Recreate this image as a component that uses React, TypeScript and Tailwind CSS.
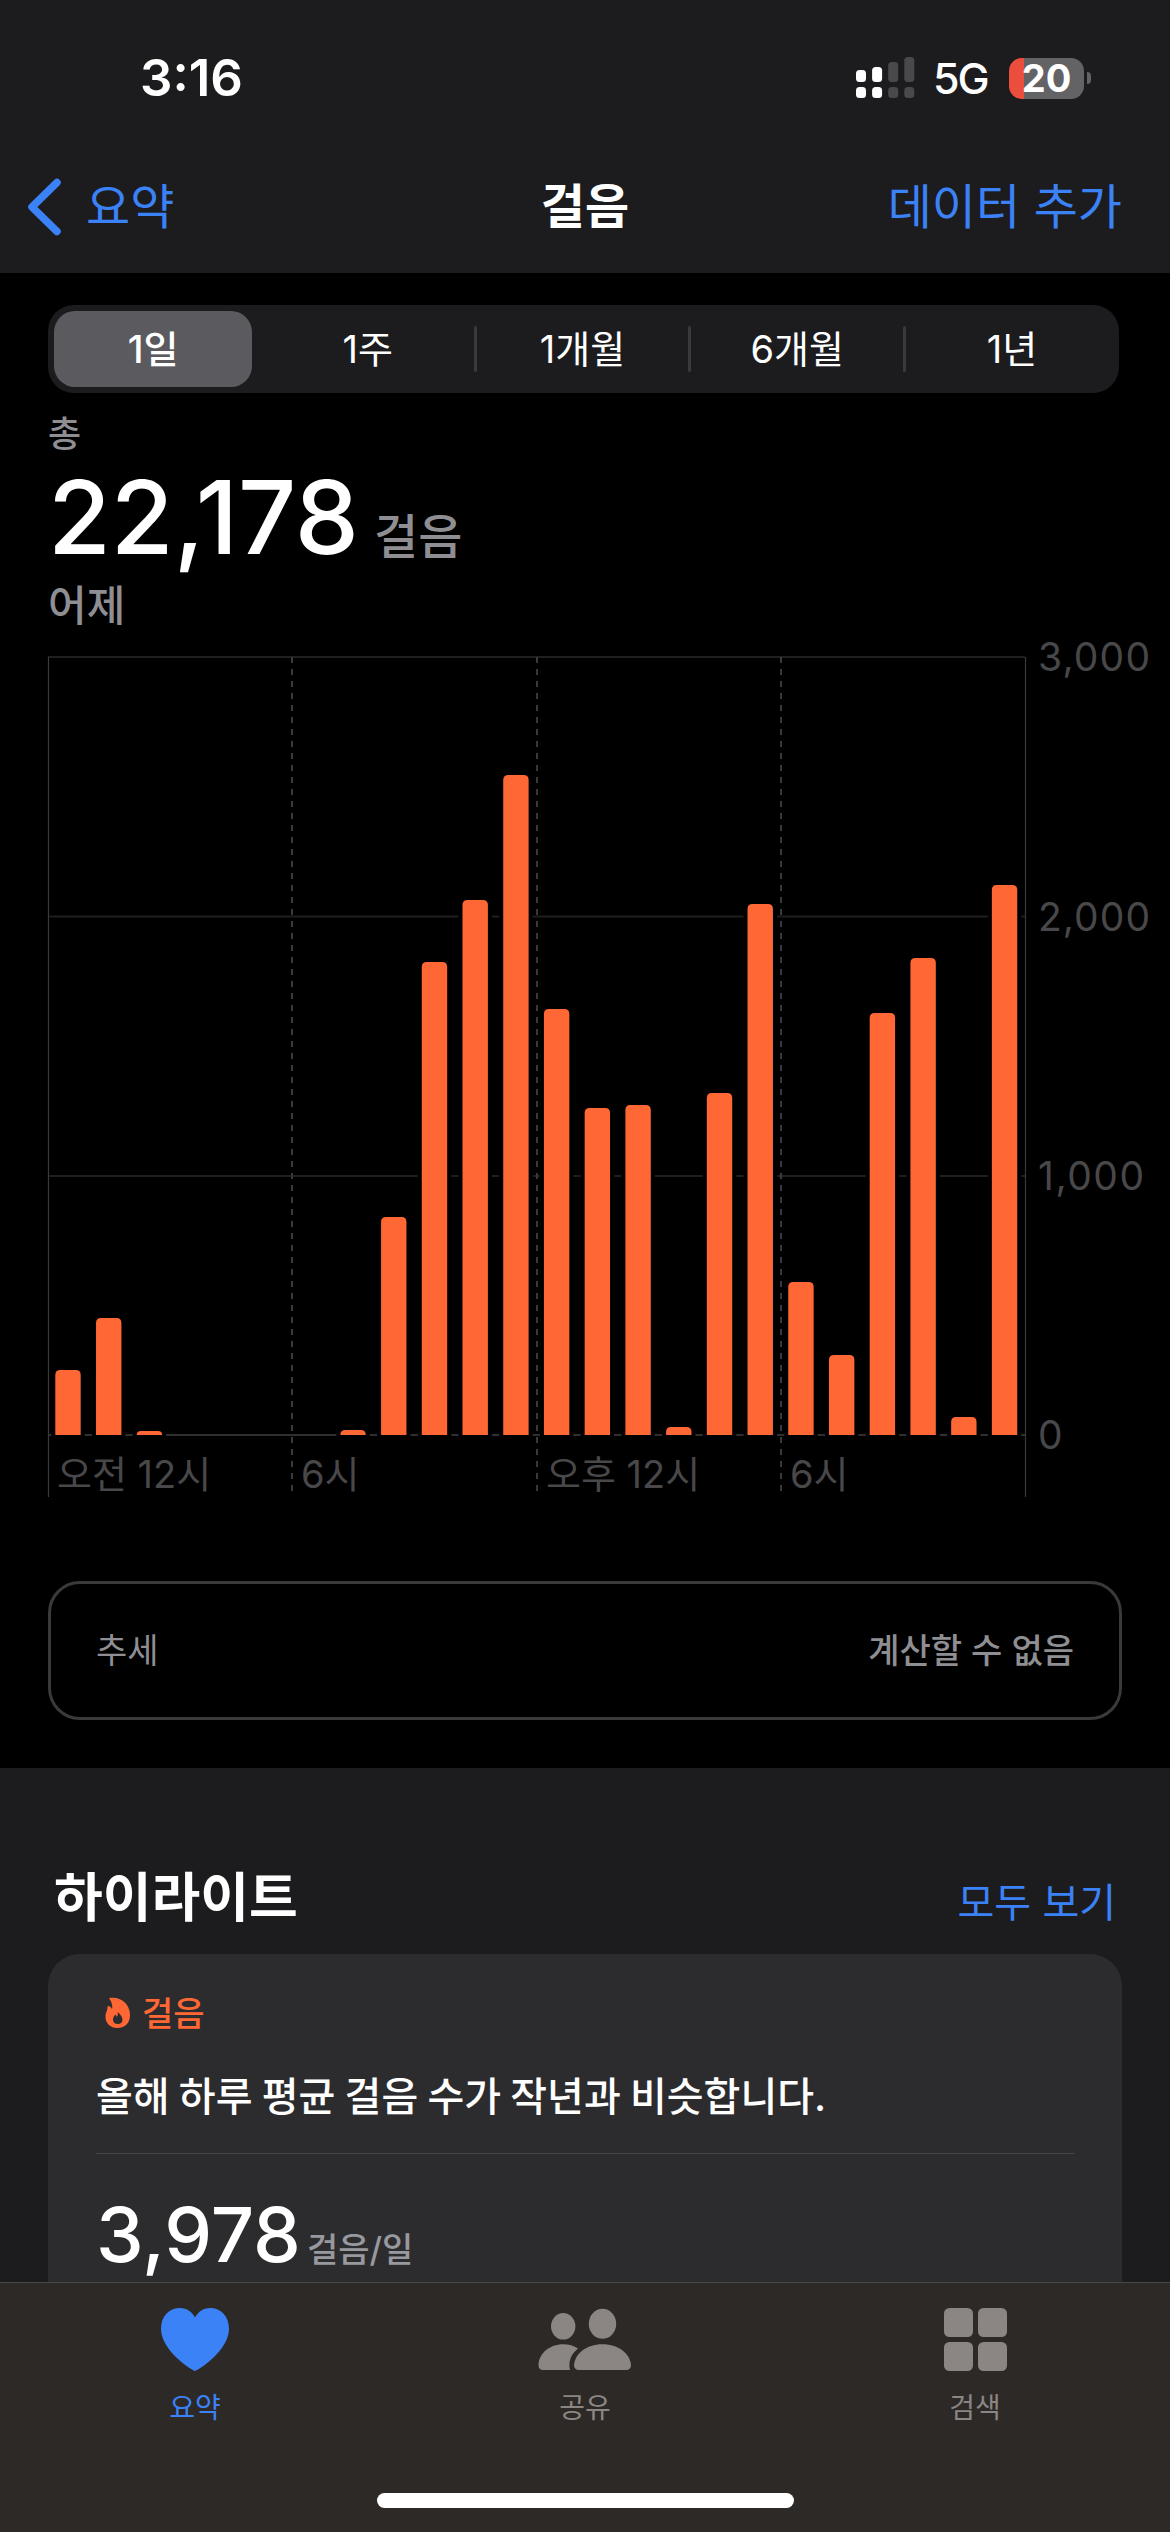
import { Fragment, useState } from 'react';

const ranges = ['1일', '1주', '1개월', '6개월', '1년'];

// Top edge of each hourly bar, null when there are no steps
const barTops: (number | null)[] = [
  1370, 1318, 1431, null, null, null, null, 1430, 1217, 962, 900, 775,
  1009, 1108, 1105, 1427, 1093, 904, 1282, 1355, 1013, 958, 1417, 885,
];

const CHART_TOP = 631;
const BASELINE = 1435;
const BAR_WIDTH = 25.4;

const barX = (i: number) => 55.3 + i * 40.72;

const SignalIcon = () => (
  <svg width="60" height="42" viewBox="0 0 60 42">
    {[13, 10, 5, 0].map((top, i) => (
      <g key={i} fill={i < 2 ? '#fff' : '#49494b'}>
        <rect x={i * 16.1} y={top} width="10" height={25 - top} rx="3.5" />
        <rect x={i * 16.1} y="30" width="10" height="11" rx="3.5" />
      </g>
    ))}
  </svg>
);

const StatusBar = () => (
  <div className="flex h-[155px] items-start justify-between pt-[57px]">
    <span className="ml-[140px] text-[51px] leading-[42px] font-semibold">3:16</span>
    <div className="mr-[79px] flex items-center">
      <SignalIcon />
      <span className="ml-[17px] w-[58px] text-[43px] leading-[42px] font-medium tracking-[-2px]">5G</span>
      <div className="ml-[18px] flex h-[41px] w-[75px] items-center justify-center rounded-[13px] bg-[linear-gradient(90deg,#eb4e3d_15px,#636366_15px)] text-[38px] leading-[41px] font-bold">
        20
      </div>
      <div className="ml-[3px] h-3 w-1 rounded-r-full bg-[#636366]" />
    </div>
  </div>
);

const NavBar = () => (
  <div className="grid h-[118px] grid-cols-3 items-center pb-[14px] text-[48px] leading-[60px]">
    <button className="flex items-center text-[#3b82f7]">
      <svg className="ml-[27px]" width="34" height="58" viewBox="0 0 34 58" fill="none">
        <path d="M30 4.500L5 29L30 53.500" stroke="currentColor" strokeWidth="7.500" strokeLinecap="round" strokeLinejoin="round" />
      </svg>
      <span className="ml-[25px]">요약</span>
    </button>
    <h1 className="text-center font-semibold">걸음</h1>
    <button className="mr-[48px] text-right text-[#3b82f7]">데이터 추가</button>
  </div>
);

const StepsChart = () => (
  <svg
    className="block font-['Inter','Noto_Sans_CJK_KR',sans-serif]"
    width="1170"
    height="879"
    viewBox={`0 ${CHART_TOP} 1170 879`}
  >
    {[657, 916.5, 1176].map(y => (
      <line key={y} x1="48" x2="1025" y1={y} y2={y} stroke="#1f1f20" strokeWidth="2" />
    ))}
    <line x1="48" x2="1025" y1={BASELINE} y2={BASELINE} stroke="#2f2f31" strokeWidth="2" />

    {/* Grid lines stop short of the bars */}
    {barTops.map((top, i) =>
      top === null ? null : (
        <rect key={i} x={barX(i) - 4} y={top - 4} width={BAR_WIDTH + 8} height={BASELINE - top + 5} fill="#000" />
      )
    )}

    <path d="M48.500 657V1497M1025.500 657V1497" stroke="#3a3a3c" strokeWidth="1.200" />
    {[292, 537, 781].map(x => (
      <line key={x} x1={x} x2={x} y1="657" y2="1497" stroke="#3a3a3c" strokeWidth="2" strokeDasharray="6 6" />
    ))}

    {barTops.map((top, i) => {
      if (top === null) return null;
      const r = Math.min(5, BASELINE - top);
      return (
        <path
          key={i}
          d={`M${barX(i)} ${BASELINE}V${top + r}q0 ${-r} ${r} ${-r}h${BAR_WIDTH - 2 * r}q${r} 0 ${r} ${r}V${BASELINE}z`}
          fill="#ff6734"
        />
      );
    })}

    <g fill="#48484a" fontSize="39">
      <text x="1038" y="671" textLength="112">3,000</text>
      <text x="1038" y="930.500" textLength="112">2,000</text>
      <text x="1038" y="1190" textLength="106">1,000</text>
      <text x="1038" y="1449">0</text>
    </g>
    <g fill="#48484a" fontSize="38">
      <text x="57" y="1488">오전 12시</text>
      <text x="301" y="1488">6시</text>
      <text x="546" y="1488">오후 12시</text>
      <text x="790" y="1488">6시</text>
    </g>
  </svg>
);

const HeartIcon = () => (
  <svg width="68" height="63" viewBox="0 0 68 63" fill="currentColor">
    <path d="M34 63C32 63 0 43 0 21C0 8 8 0 19 0C26 0 31 4 34 9.500C37 4 42 0 49 0C60 0 68 8 68 21C68 43 36 63 34 63z" />
  </svg>
);

const PeopleIcon = () => (
  <svg width="94" height="63" viewBox="0 0 94 63" fill="currentColor">
    <ellipse cx="25.200" cy="18.300" rx="12.200" ry="13.200" />
    <ellipse cx="64.500" cy="15.800" rx="13.700" ry="15" />
    <path d="M5 62C2 62 0.500 60.500 0.500 57C1 45 12 36.300 25 36.300C31 36.300 36 37.800 40 40.500C33 46 30 54 32 62z" />
    <path d="M41 62C38 62 36 60.500 36 57C37 46 48 36.300 64.500 36.300C81 36.300 92 46 93 57C93 60.500 91 62 88 62z" />
  </svg>
);

const GridIcon = () => (
  <svg width="63" height="63" viewBox="0 0 63 63" fill="currentColor">
    <rect width="29" height="29" rx="5.500" />
    <rect x="34" width="29" height="29" rx="5.500" />
    <rect y="34" width="29" height="29" rx="5.500" />
    <rect x="34" y="34" width="29" height="29" rx="5.500" />
  </svg>
);

const FlameIcon = () => (
  <svg width="26" height="32" viewBox="0 0 26 32">
    <path
      d="M4 1C15-1 25 6 25 18C25 26 20 31 12.500 31C5 31 0.500 26 0.500 20C0.500 15 3 13 2.500 9C5 9 6 10 7 12C8 8 6 4 4 1z"
      fill="#ff6734"
    />
    <path d="M12.500 15C16 18 17.500 20 17.500 23C17.500 25.500 15.500 27 13 27C10 27 8 25.500 8 22.500C8 20.500 9.500 19 10 17.500C11 18 11.500 18.500 11.700 20C13 18.500 13 17 12.500 15z" fill="#2c2c2e" />
  </svg>
);

const tabs = [
  { label: '요약', icon: <HeartIcon /> },
  { label: '공유', icon: <PeopleIcon /> },
  { label: '검색', icon: <GridIcon /> },
];

export default function App() {
  const [range, setRange] = useState(0);
  const [activeTab, setActiveTab] = useState(0);

  return (
    <div className="flex h-[2532px] w-[1170px] flex-col overflow-hidden bg-[#1c1c1e] font-['Inter','Noto_Sans_CJK_KR',sans-serif] text-white">
      <header className="h-[273px] shrink-0">
        <StatusBar />
        <NavBar />
      </header>

      <section className="h-[1495px] shrink-0 bg-black pt-8">
        {/* Range selector */}
        <div className="mx-[48px] flex h-[88px] w-[1071px] items-center rounded-[26px] bg-[#1c1c1e] p-1.5 pr-2">
          {ranges.map((label, i) => (
            <Fragment key={label}>
              {i > 0 && (
                <div className="flex flex-1 justify-center">
                  {i !== range && i - 1 !== range && <div className="h-[46px] w-[3px] rounded-full bg-[#3a3a3c]" />}
                </div>
              )}
              <button
                onClick={() => setRange(i)}
                className={`h-full w-[198px] rounded-[21px] text-[38px] leading-[76px] ${
                  i === range ? 'bg-[#5b5a5f] font-medium' : ''
                }`}
              >
                {label}
              </button>
            </Fragment>
          ))}
        </div>

        {/* Summary */}
        <div className="h-[238px] px-[48px] pt-[15px] font-medium text-[#8e8e93]">
          <p className="text-[36px] leading-[52px]">총</p>
          <div className="flex h-[121px] items-baseline">
            <span className="text-[102px] leading-[114px] text-white">22,178</span>
            <span className="ml-[15px] text-[48px]">걸음</span>
          </div>
          <p className="text-[42px] leading-[50px]">어제</p>
        </div>

        <StepsChart />

        {/* Trend */}
        <div className="mx-[48px] mt-[71px] flex h-[139px] items-center justify-between rounded-[32px] border-[3px] border-[#3a3a3c] px-[45px] text-[34px] text-[#8e8e93]">
          <span>추세</span>
          <span className="font-medium">계산할 수 없음</span>
        </div>
      </section>

      <section className="flex min-h-0 flex-1 flex-col px-[48px]">
        <div className="flex h-[186px] items-end justify-between px-1.5 pb-6">
          <h2 className="text-[53px] leading-[64px] font-bold">하이라이트</h2>
          <button className="pb-0.5 text-[40px] leading-[50px] text-[#3b82f7]">모두 보기</button>
        </div>
        <div className="min-h-0 flex-1 overflow-hidden rounded-t-[32px] bg-[#2c2c2e] px-[48px] pt-[34px]">
          <div className="flex h-[50px] items-center text-[#ff6734]">
            <span className="ml-[9px]">
              <FlameIcon />
            </span>
            <span className="ml-[11px] text-[34px] font-medium">걸음</span>
          </div>
          <p className="mt-[29px] text-[40px] leading-[60px] font-medium [word-spacing:-1.4px]">
            올해 하루 평균 걸음 수가 작년과 비슷합니다.
          </p>
          <div className="mt-[26px] h-px bg-[#48484a]" />
          <div className="mt-[30px] flex items-baseline font-medium">
            <span className="text-[76px] leading-[100px]">3,978</span>
            <span className="ml-1.5 text-[34px] text-[#98989f]">걸음/일</span>
          </div>
        </div>
      </section>

      <nav className="h-[250px] shrink-0 border-t border-[#48484a] bg-[#2d2926]">
        <div className="grid h-[210px] grid-cols-3 pt-[25px]">
          {tabs.map((tab, i) => (
            <button
              key={tab.label}
              onClick={() => setActiveTab(i)}
              className={`flex flex-col items-center ${i === activeTab ? 'text-[#3b82f7]' : 'text-[#8b8583]'}`}
            >
              {tab.icon}
              <span className="mt-[17px] text-[28px] leading-[40px]">{tab.label}</span>
            </button>
          ))}
        </div>
        <div className="mx-auto h-[15px] w-[417px] rounded-full bg-white" />
      </nav>
    </div>
  );
}
